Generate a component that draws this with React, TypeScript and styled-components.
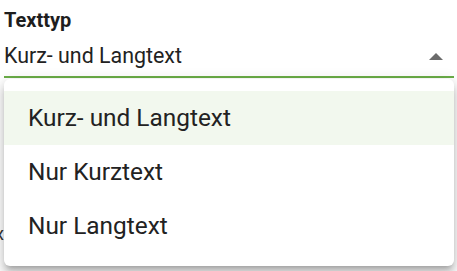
import React from "react";
import styled, { createGlobalStyle } from "styled-components";

const Global = createGlobalStyle`
  html, body {
    margin: 0;
    padding: 0;
    background: #ffffff;
    font-family: Roboto, "Noto Sans", Arial, sans-serif;
    overflow: hidden;
  }
`;

const Page = styled.div`
  position: relative;
  width: 457px;
  height: 271px;
  padding: 0 3px 0 4px;
  box-sizing: border-box;
  overflow: hidden;
`;

const Label = styled.div`
  margin-top: 9px;
  font-size: 20px;
  line-height: 22px;
  font-weight: 700;
  color: #1e1e1e;
`;

const SelectRow = styled.div`
  margin-top: 13px;
  height: 32px;
  display: flex;
  justify-content: space-between;
  align-items: flex-start;
  border-bottom: 2px solid #6aad47;
`;

const Value = styled.span`
  font-size: 21.4px;
  line-height: 24px;
  color: #222222;
`;

const Arrow = styled.svg`
  margin-top: 9px;
  margin-right: 11px;
  width: 14px;
  height: 7px;
  display: block;
`;

const BehindText = styled.div`
  margin-top: 145px;
  margin-left: -9px;
  font-size: 18px;
  line-height: 21px;
  color: #333333;
`;

const Menu = styled.ul`
  position: absolute;
  top: 79px;
  left: 4px;
  right: 3px;
  margin: 0;
  padding: 12px 0 13px;
  list-style: none;
  background: #ffffff;
  border-radius: 6px;
  box-shadow: 0 5px 5px -3px rgba(0, 0, 0, 0.2),
    0 8px 10px 1px rgba(0, 0, 0, 0.14), 0 3px 14px 2px rgba(0, 0, 0, 0.12);
`;

const Item = styled.li<{ $selected?: boolean }>`
  height: 54px;
  box-sizing: border-box;
  padding: 13px 24px;
  font-size: 24.4px;
  line-height: 28px;
  color: #222222;
  background: ${(p) => (p.$selected ? "#f2f8ee" : "transparent")};
`;

const options = ["Kurz- und Langtext", "Nur Kurztext", "Nur Langtext"];

export default function App() {
  return (
    <>
      <Global />
      <Page>
        <Label>Texttyp</Label>
        <SelectRow>
          <Value>Kurz- und Langtext</Value>
          <Arrow viewBox="0 0 14 7">
            <polygon points="0,7 7,0 14,7" fill="#6b6b6b" />
          </Arrow>
        </SelectRow>
        <BehindText>x</BehindText>
        <Menu>
          {options.map((o, i) => (
            <Item key={o} $selected={i === 0}>
              {o}
            </Item>
          ))}
        </Menu>
      </Page>
    </>
  );
}
